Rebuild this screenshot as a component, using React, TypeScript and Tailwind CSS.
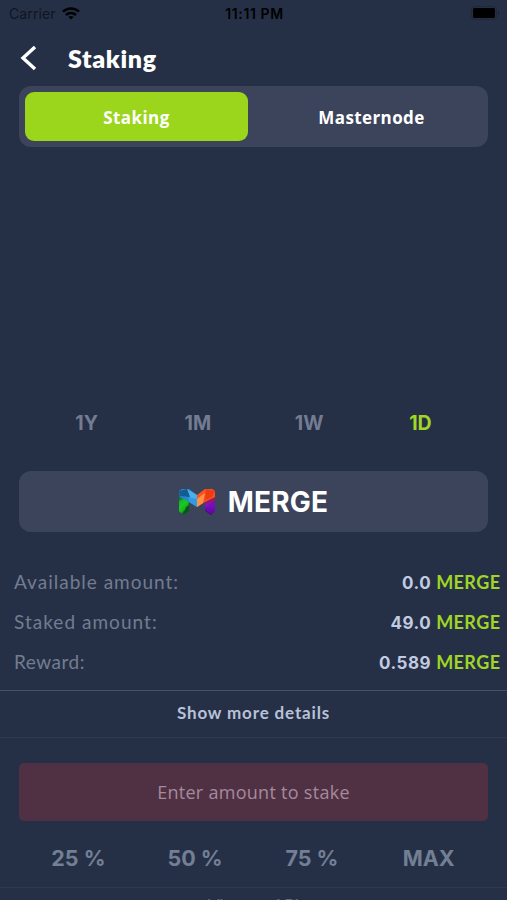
import { useState } from 'react';

const tabs = ['Staking', 'Masternode'];
const ranges = ['1Y', '1M', '1W', '1D'];
const shares = ['25 %', '50 %', '75 %', 'MAX'];

const balances = [
  { label: 'Available amount:', value: '0.0', labelClass: 'tracking-[1px]', valueClass: 'tracking-[0.5px]' },
  { label: 'Staked amount:', value: '49.0', labelClass: 'tracking-[1.03px]', valueClass: 'tracking-[0.5px]' },
  { label: 'Reward:', value: '0.589', labelClass: 'tracking-[0.5px]', valueClass: 'tracking-[0.55px]' },
];

const StatusBar = () => (
  <div className="flex h-7 shrink-0 items-center justify-between pb-[2px] pl-[9px] pr-[7px] font-[Inter,sans-serif] text-[14px] text-black">
    <div className="flex w-[120px] items-center gap-[6px]">
      <span className="tracking-[0.1px] text-[#10151f]">Carrier</span>
      <svg width="18" height="13" viewBox="0 0 18 13" fill="none" stroke="currentColor" strokeWidth="2.5">
        <path d="M1 4.7C5.5.4 12.5.4 17 4.7" />
        <path d="M4 8c2.8-2.6 7.2-2.6 10 0" />
        <path d="M9 12.6 6.4 10c1.5-1.3 3.7-1.3 5.2 0Z" fill="currentColor" stroke="none" />
      </svg>
    </div>
    <span className="font-semibold tracking-[0.6px]">11:11 PM</span>
    <div className="flex w-[120px] justify-end">
      <svg width="29" height="14" viewBox="0 0 29 14">
        <rect x=".5" y=".5" width="25" height="13" rx="3.5" fill="none" stroke="#1f273a" />
        <rect x="2" y="2" width="22" height="10" rx="1.5" />
        <path d="M27 5v4c1.8-.7 1.8-3.3 0-4Z" fill="#1c2334" />
      </svg>
    </div>
  </div>
);

const MergeLogo = () => (
  <svg width="36" height="28" viewBox="0 0 36 28">
    <defs>
      <linearGradient id="left" x1="0" y1="0" x2="0.4" y2="1">
        <stop offset="0" stopColor="#176ba5" />
        <stop offset=".35" stopColor="#08793d" />
        <stop offset=".65" stopColor="#20d51c" />
        <stop offset="1" stopColor="#075817" />
      </linearGradient>
      <linearGradient id="right" x1="0" y1="0" x2="0" y2="1">
        <stop offset="0" stopColor="#e42b12" />
        <stop offset=".4" stopColor="#9b1851" />
        <stop offset=".65" stopColor="#8710cf" />
        <stop offset="1" stopColor="#360463" />
      </linearGradient>
    </defs>
    <path d="M0 3 3 1l7 8v14l-6 4-4-4Z" fill="url(#left)" />
    <path d="m0 13 9-3v9l-7 6-2-2Z" fill="#18c522" opacity=".7" />
    <path d="m4 27 3-8 3-2v6Z" fill="#075817" />
    <path d="M36 3 33 1l-7 8v14l6 4 4-4Z" fill="url(#right)" />
    <path d="m26 20 10-8v11l-4 4Z" fill="#6a0eb8" opacity=".6" />
    <path d="M0 3 3 1l7 0 8 6v12l-8-5-9-5Z" fill="#2886cd" />
    <path d="m8 1 10 6v11l-6-5Z" fill="#49b0e8" />
    <path d="m0 3 8-2 3 8-10-1Z" fill="#145b91" />
    <path d="m9 9 9 2v8l-8-5Z" fill="#2f9be0" />
    <path d="m36 3-3-2h-7l-8 6v12l8-5 10-5Z" fill="#f9541c" />
    <path d="m18 11 8-6-2 10-6 4Z" fill="#ff9249" />
    <path d="m27 1 9 2-3 6-7 3Z" fill="#ed3b14" />
  </svg>
);

export default function App() {
  const [tab, setTab] = useState('Staking');
  const [range, setRange] = useState('1D');

  return (
    <div className="flex h-[900px] w-full flex-col overflow-hidden bg-[#253047] font-[Lato,sans-serif] text-white">
      <StatusBar />

      <header className="flex h-[58px] shrink-0 items-center pl-5 pt-[2px]">
        <button aria-label="Back">
          <svg width="18" height="26" viewBox="0 0 18 26" fill="none" stroke="currentColor" strokeWidth="3.4">
            <path d="M15 2 3 13l12 11" />
          </svg>
        </button>
        <h1 className="ml-[30px] text-[25px] font-extrabold leading-8 tracking-[0.65px]">Staking</h1>
      </header>

      <div className="mx-[19px] flex h-[61px] shrink-0 rounded-xl bg-[#3b445b] p-[6px]">
        {tabs.map((name) => (
          <button
            key={name}
            onClick={() => setTab(name)}
            className={`h-[49px] rounded-[9px] pt-[2px] font-['Open_Sans',sans-serif] text-[17px] font-bold tracking-[0.4px] ${
              name === 'Staking' ? 'w-[223px]' : 'flex-1 pl-[13px]'
            } ${tab === name ? 'bg-[#9bd61c]' : ''}`}
          >
            {name}
          </button>
        ))}
      </div>

      <div className="h-[259px] shrink-0" />

      <div className="grid h-[34px] shrink-0 grid-cols-4 px-[31px] pt-px font-[Inter,sans-serif] text-[19.5px] font-bold">
        {ranges.map((name) => (
          <button
            key={name}
            onClick={() => setRange(name)}
            className={range === name ? 'text-[#a0d624]' : 'text-[#737c90]'}
          >
            {name}
          </button>
        ))}
      </div>

      <div className="mx-[19px] mt-[31px] flex h-[61px] shrink-0 items-center justify-center gap-[13px] rounded-xl bg-[#3b445b]">
        <MergeLogo />
        <span className="pt-px font-[Inter,sans-serif] text-[28px] font-bold tracking-[0.2px]">MERGE</span>
      </div>

      <div className="mt-[30px] flex shrink-0 flex-col pl-[14px] pr-[7px]">
        {balances.map(({ label, value, labelClass, valueClass }) => (
          <div key={label} className="flex h-10 items-center justify-between">
            <span className={`text-[19px] text-[#737c90] ${labelClass}`}>{label}</span>
            <span className="flex items-baseline gap-[5px] pt-[2px] font-bold">
              <span className={`font-[Inter,sans-serif] text-[17px] text-[#c2cbe0] ${valueClass}`}>{value}</span>
              <span className="-mr-[0.4px] text-[18px] tracking-[0.4px] text-[#a0d624]">MERGE</span>
            </span>
          </div>
        ))}
      </div>

      <button className="mt-[8px] h-12 shrink-0 border-b border-t border-b-[#30394f] border-t-[#465066] pb-[2px] text-[17px] font-bold tracking-[0.85px] text-[#b8c1d7]">
        Show more details
      </button>

      <div className="mx-[19px] mt-[25px] h-[58px] shrink-0 rounded-[5px] bg-[#503144]">
        <input
          placeholder="Enter amount to stake"
          className="h-full w-full text-center font-['Open_Sans',sans-serif] text-[18px] tracking-[0.28px] outline-none placeholder:text-[#a58a9c]"
        />
      </div>

      <div className="mt-[15px] grid h-[44px] shrink-0 grid-cols-4 px-5 font-[Inter,sans-serif] text-[21.5px] font-bold text-[#737f94]">
        {shares.map((share) => (
          <button key={share} className="pt-px">
            {share}
          </button>
        ))}
      </div>

      <footer className="mt-[7px] h-[13px] shrink-0 overflow-hidden border-t border-[#30394f] text-center text-[17px] leading-[35px] text-[#646d82]">
        View on API
      </footer>
    </div>
  );
}
